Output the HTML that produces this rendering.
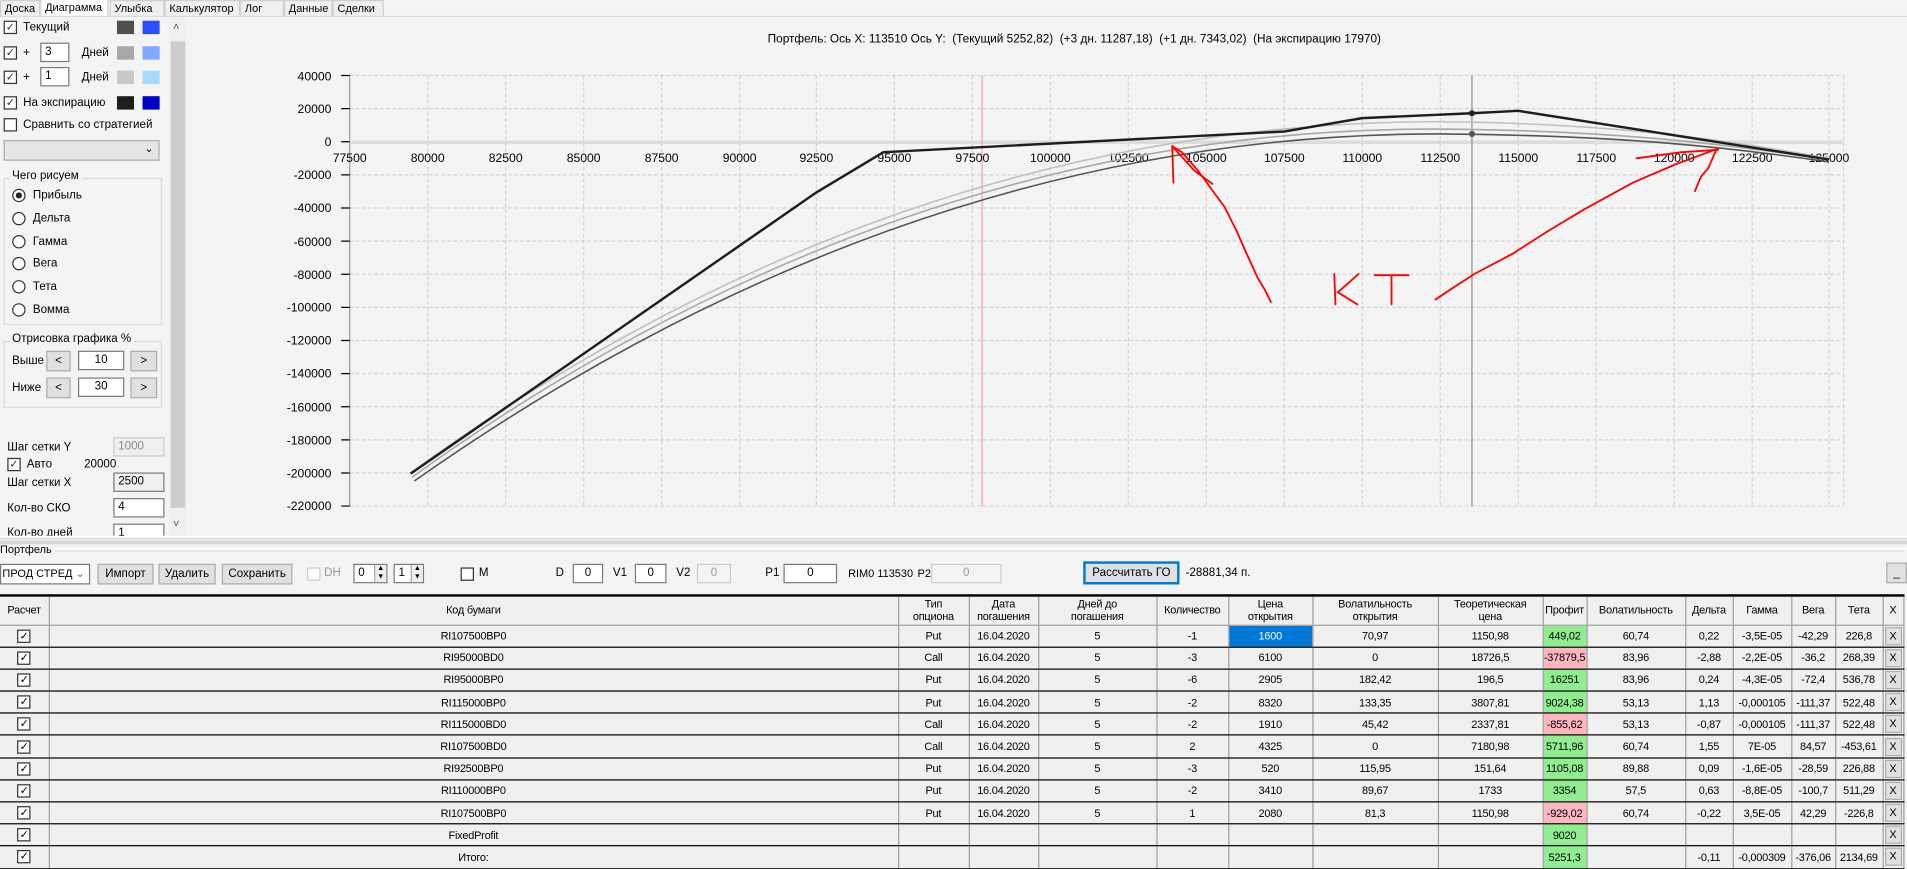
<!DOCTYPE html>
<html><head><meta charset="utf-8"><style>
*{box-sizing:border-box;margin:0;padding:0}
html,body{width:1907px;height:867px;overflow:hidden;background:#f4f4f4}
body{font-family:"Liberation Sans",sans-serif;font-size:9.5px;color:#000}
#w{position:absolute;left:0;top:0;width:1565px;height:712px;transform:scale(1.2185,1.2177);transform-origin:0 0;background:#f4f4f4}
.a{position:absolute;white-space:nowrap;line-height:14px}
.tab{position:absolute;top:0;height:13px;border:1px solid #d0d0d0;border-bottom:none;background:#f0f0f0;font-size:9px;padding:0 3px;line-height:12px;overflow:hidden;white-space:nowrap}
.cb{position:absolute;width:11px;height:11px;border:1px solid #333;background:#fff;font-size:9px;line-height:9px;text-align:center;color:#333}
.sw{position:absolute;width:14px;height:11px}
.tb{position:absolute;height:16px;background:#fff;border:1px solid #7a7a7a;font-size:9.5px;line-height:14px;padding-left:3px}
.btn{position:absolute;height:17px;background:#e1e1e1;border:1px solid #adadad;font-size:9.5px;line-height:15px;text-align:center}
.rd{position:absolute;width:11px;height:11px;border:1px solid #333;border-radius:50%;background:#fff}
.gb{position:absolute;border:1px solid #dcdcdc}
table{position:absolute;left:0;top:488px;border-collapse:collapse;table-layout:fixed;width:1562px;background:#f0f0f0}
td{border-right:1px solid #a0a0a0;border-bottom:1px solid #000;text-align:center;height:18.2px;font-size:9px;padding:0;white-space:nowrap;overflow:hidden;letter-spacing:-0.2px}
tr.h td{height:24px;background:#f0f0f0;border-bottom:1px solid #a0a0a0;line-height:10px;font-size:9px}
td.g{background:#90ee90}td.r{background:#ffb6c1}td.b{background:#0078d7;color:#fff}
td.x span{display:inline-block;width:14px;height:15px;border:1px solid #adadad;background:#e1e1e1;line-height:13px}
.ck{display:inline-block;width:11px;height:11px;border:1px solid #333;background:#fff;font-size:9px;line-height:9px}
</style></head><body><div id="w">
<!-- tabs -->
<div class="tab" style="left:0;width:33px">Доска</div>
<div class="tab" style="left:33px;width:56px;background:#fff;top:-1px;height:14px">Диаграмма</div>
<div class="tab" style="left:90px;width:45px">Улыбка</div>
<div class="tab" style="left:135px;width:62px">Калькулятор</div>
<div class="tab" style="left:197px;width:36px">Лог</div>
<div class="tab" style="left:233px;width:40px">Данные</div>
<div class="tab" style="left:273px;width:42px">Сделки</div>
<div class="a" style="left:0;top:13px;width:1565px;height:1px;background:#dcdcdc"></div>
<!-- left panel -->
<div class="cb" style="left:3px;top:17px">✓</div><div class="a" style="left:19px;top:16px">Текущий</div>
<div class="sw" style="left:96px;top:17px;background:#505050"></div><div class="sw" style="left:117px;top:17px;background:#2b4fff"></div>
<div class="cb" style="left:3px;top:38px">✓</div><div class="a" style="left:19px;top:37px">+</div>
<div class="tb" style="left:33px;top:35px;width:24px">3</div><div class="a" style="left:67px;top:37px">Дней</div>
<div class="sw" style="left:96px;top:38px;background:#a8a8a8"></div><div class="sw" style="left:117px;top:38px;background:#7fa8ff"></div>
<div class="cb" style="left:3px;top:58px">✓</div><div class="a" style="left:19px;top:57px">+</div>
<div class="tb" style="left:33px;top:55px;width:24px">1</div><div class="a" style="left:67px;top:57px">Дней</div>
<div class="sw" style="left:96px;top:58px;background:#c8c8c8"></div><div class="sw" style="left:117px;top:58px;background:#a8d8ff"></div>
<div class="cb" style="left:3px;top:79px">✓</div><div class="a" style="left:19px;top:78px">На экспирацию</div>
<div class="sw" style="left:96px;top:79px;background:#1e1e1e"></div><div class="sw" style="left:117px;top:79px;background:#0000c8"></div>
<div class="cb" style="left:3px;top:97px"></div><div class="a" style="left:19px;top:96px">Сравнить со стратегией</div>
<div class="a" style="left:3px;top:115px;width:128px;height:17px;background:#e5e5e5;border:1px solid #adadad;font-size:9px;text-align:right;padding-right:4px;line-height:13px">⌄</div>
<div class="gb" style="left:3px;top:146px;width:130px;height:121px"></div>
<div class="a" style="left:8px;top:138px;background:#f4f4f4;padding:0 2px">Чего рисуем</div>
<div class="rd" style="left:10px;top:155px"><div style="position:absolute;left:2px;top:2px;width:5px;height:5px;border-radius:50%;background:#222"></div></div><div class="a" style="left:27px;top:154px">Прибыль</div>
<div class="rd" style="left:10px;top:174px"></div><div class="a" style="left:27px;top:173px">Дельта</div>
<div class="rd" style="left:10px;top:193px"></div><div class="a" style="left:27px;top:192px">Гамма</div>
<div class="rd" style="left:10px;top:211px"></div><div class="a" style="left:27px;top:210px">Вега</div>
<div class="rd" style="left:10px;top:230px"></div><div class="a" style="left:27px;top:229px">Тета</div>
<div class="rd" style="left:10px;top:249px"></div><div class="a" style="left:27px;top:248px">Вомма</div>
<div class="gb" style="left:3px;top:280px;width:130px;height:55px"></div>
<div class="a" style="left:8px;top:272px;background:#f4f4f4;padding:0 2px">Отрисовка графика %</div>
<div class="a" style="left:10px;top:290px">Выше</div>
<div class="btn" style="left:38px;top:288px;width:20px">&lt;</div><div class="tb" style="left:64px;top:288px;width:38px;text-align:center;padding:0">10</div><div class="btn" style="left:107px;top:288px;width:22px">&gt;</div>
<div class="a" style="left:10px;top:312px">Ниже</div>
<div class="btn" style="left:38px;top:310px;width:20px">&lt;</div><div class="tb" style="left:64px;top:310px;width:38px;text-align:center;padding:0">30</div><div class="btn" style="left:107px;top:310px;width:22px">&gt;</div>
<div class="a" style="left:6px;top:361px">Шаг сетки Y</div><div class="tb" style="left:93px;top:359px;width:42px;background:#f0f0f0;border-color:#ccc;color:#888">1000</div>
<div class="cb" style="left:6px;top:376px">✓</div><div class="a" style="left:22px;top:375px">Авто</div><div class="a" style="left:69px;top:375px">20000</div>
<div class="a" style="left:6px;top:390px">Шаг сетки X</div><div class="tb" style="left:93px;top:388px;width:42px;background:#f0f0f0">2500</div>
<div class="a" style="left:6px;top:411px">Кол-во СКО</div><div class="tb" style="left:93px;top:409px;width:42px">4</div>
<div class="a" style="left:6px;top:431px;height:9px;overflow:hidden">Кол-во дней</div><div class="tb" style="left:93px;top:430px;width:42px;height:10px;border-bottom:none">1</div>
<div class="a" style="left:139px;top:14px;width:14px;height:426px;background:#f0f0f0"></div>
<div class="a" style="left:140px;top:34px;width:12px;height:383px;background:#cdcdcd"></div>
<div class="a" style="left:142px;top:15px;font-size:9px;color:#555">˄</div>
<div class="a" style="left:142px;top:423px;font-size:9px;color:#555">˅</div>
<!-- chart title -->
<div class="a" style="left:630px;top:26px;font-size:9.7px">Портфель: Ось X: 113510 Ось Y:&nbsp; (Текущий 5252,82)&nbsp; (+3 дн. 11287,18)&nbsp; (+1 дн. 7343,02)&nbsp; (На экспирацию 17970)</div>
<svg class="a" style="left:0;top:0;line-height:normal" width="1565" height="440" viewBox="0 0 1565 440" font-family="Liberation Sans" font-size="10">
<g stroke="#d4d4d4" stroke-dasharray="3,2" stroke-width="1">
<path d="M287,62H1513M287,89.2H1513M287,116.4H1513M287,143.6H1513M287,170.8H1513M287,198H1513M287,225.2H1513M287,252.4H1513M287,279.6H1513M287,306.8H1513M287,334H1513M287,361.2H1513M287,388.4H1513M287,415.6H1513"/>
<path d="M351,62V416M415,62V416M479,62V416M543,62V416M607,62V416M670,62V416M734,62V416M798,62V416M862,62V416M926,62V416M990,62V416M1054,62V416M1118,62V416M1182,62V416M1246,62V416M1310,62V416M1374,62V416M1438,62V416M1501,62V416M1513,62V416"/>
</g>
<path d="M287,62V416" stroke="#999"/>
<path d="M287,116.8H1513" stroke="#ddd" stroke-width="3"/>
<path d="M806,62V416" stroke="#f4a0b0"/>
<path d="M1208,62V416" stroke="#8a8f99"/>
<g stroke="#000"><path d="M280,62h7M280,89.2h7M280,116.4h7M280,143.6h7M280,170.8h7M280,198h7M280,225.2h7M280,252.4h7M280,279.6h7M280,306.8h7M280,334h7M280,361.2h7M280,388.4h7M280,415.6h7"/></g>
<g text-anchor="end">
<text x="272" y="66">40000</text><text x="272" y="93">20000</text><text x="272" y="120">0</text><text x="272" y="147">-20000</text><text x="272" y="174">-40000</text><text x="272" y="202">-60000</text><text x="272" y="229">-80000</text><text x="272" y="256">-100000</text><text x="272" y="283">-120000</text><text x="272" y="310">-140000</text><text x="272" y="338">-160000</text><text x="272" y="365">-180000</text><text x="272" y="392">-200000</text><text x="272" y="419">-220000</text></g>
<g text-anchor="middle">
<text x="287" y="133">77500</text><text x="351" y="133">80000</text><text x="415" y="133">82500</text><text x="479" y="133">85000</text><text x="543" y="133">87500</text><text x="607" y="133">90000</text><text x="670" y="133">92500</text><text x="734" y="133">95000</text><text x="798" y="133">97500</text><text x="862" y="133">100000</text><text x="926" y="133">102500</text><text x="990" y="133">105000</text><text x="1054" y="133">107500</text><text x="1118" y="133">110000</text><text x="1182" y="133">112500</text><text x="1246" y="133">115000</text><text x="1310" y="133">117500</text><text x="1374" y="133">120000</text><text x="1438" y="133">122500</text><text x="1501" y="133">125000</text></g>
<g fill="none">
<path d="M336,389 C600,198 880,100 1180,100 C1330,101 1420,116 1501,130" stroke="#c0c0c0" stroke-width="1.3"/>
<path d="M338,392 C605,200 885,105 1180,106 C1330,107 1420,119 1501,131" stroke="#a8a8a8" stroke-width="1.3"/>
<path d="M340,395 C610,205 890,110 1180,110 C1330,111 1420,121 1501,133" stroke="#555" stroke-width="1.3"/>
<path d="M337,389 L670,158 L725,125 L1054,108 L1118,97 L1208,93 L1246,91 L1501,131" stroke="#1e1e1e" stroke-width="2"/>
</g>
<circle cx="1208" cy="93" r="2.5" fill="#222"/><circle cx="1208" cy="110" r="2.5" fill="#555"/>
<g stroke="#f00" stroke-width="1.5" fill="none" stroke-linecap="round">
<path d="M1043,248 L1038,238 L1032,228 L1022,206 L1015,190 L1005,170 L994,155 L983,140 L970,125 L962,120"/>
<path d="M962,120 L963,150"/><path d="M962,120 L980,140 L995,151"/>
<path d="M1178,246 L1190,238 L1210,225 L1242,208 L1270,190 L1300,172 L1340,150 L1375,135 L1410,122"/>
<path d="M1343,130 L1380,125 L1410,123"/><path d="M1391,157 L1396,145 L1402,138 L1408,124"/>
<path d="M1095,225 L1096,250 M1115,225 L1098,240 L1114,250"/>
<path d="M1128,226 L1156,226 M1142,226 L1142,250"/>
</g>
</svg>
<!-- splitter -->
<div class="a" style="left:0;top:440px;width:1565px;height:1px;background:#fff"></div>
<div class="a" style="left:0;top:442px;width:1565px;height:1px;background:#d8d8d8"></div>
<div class="a" style="left:0;top:444px;width:1565px;height:3px;background:#d3d3d3"></div>
<div class="a" style="left:0;top:450px;width:1565px;height:1px;background:#fff"></div>
<div class="a" style="left:0;top:444px;font-size:9px">Портфель</div>
<div class="a" style="left:45px;top:452px;width:1518px;height:1px;background:#dcdcdc"></div>
<!-- toolbar -->
<div class="a" style="left:0;top:463px;width:74px;height:17px;background:#fff;border:1px solid #7a7a7a;line-height:15px;padding-left:1px;font-size:9px">ПРОД СТРЕД <span style="color:#666">⌄</span></div>
<div class="btn" style="left:80px;top:463px;width:46px">Импорт</div>
<div class="btn" style="left:130px;top:463px;width:47px">Удалить</div>
<div class="btn" style="left:182px;top:463px;width:58px">Сохранить</div>
<div class="cb" style="left:252px;top:466px;border-color:#ccc"></div><div class="a" style="left:266px;top:464px;color:#999">DH</div>
<div class="tb" style="left:290px;top:463px;width:28px">0</div><div class="a" style="left:307px;top:464px;width:10px;height:14px;background:#eee;border-left:1px solid #aaa;font-size:6px;line-height:7px;text-align:center">▲<br>▼</div>
<div class="tb" style="left:323px;top:463px;width:25px">1</div><div class="a" style="left:337px;top:464px;width:10px;height:14px;background:#eee;border-left:1px solid #aaa;font-size:6px;line-height:7px;text-align:center">▲<br>▼</div>
<div class="cb" style="left:378px;top:466px"></div><div class="a" style="left:393px;top:464px">M</div>
<div class="a" style="left:456px;top:464px">D</div><div class="tb" style="left:470px;top:463px;width:25px;text-align:center;padding:0">0</div>
<div class="a" style="left:503px;top:464px">V1</div><div class="tb" style="left:521px;top:463px;width:26px;text-align:center;padding:0">0</div>
<div class="a" style="left:555px;top:464px">V2</div><div class="tb" style="left:572px;top:463px;width:28px;text-align:center;padding:0;border-color:#ccc;color:#999;background:#f4f4f4">0</div>
<div class="a" style="left:628px;top:464px">P1</div><div class="tb" style="left:643px;top:463px;width:44px;text-align:center;padding:0">0</div>
<div class="a" style="left:696px;top:464px;font-size:9px">RIM0 113530</div><div class="a" style="left:753px;top:464px;font-size:9px">P2</div>
<div class="tb" style="left:764px;top:463px;width:58px;text-align:center;padding:0;border-color:#ccc;color:#999;background:#f4f4f4">0</div>
<div class="btn" style="left:889px;top:461px;width:79px;height:19px;border:2px solid #0078d7;line-height:15px">Рассчитать ГО</div>
<div class="a" style="left:973px;top:464px">-28881,34 п.</div>
<div class="btn" style="left:1548px;top:462px;width:17px">_</div>
<!-- table -->
<table>
<colgroup><col style="width:40px"><col style="width:697px"><col style="width:58px"><col style="width:57px"><col style="width:97px"><col style="width:59px"><col style="width:69px"><col style="width:103px"><col style="width:86px"><col style="width:36px"><col style="width:81px"><col style="width:39px"><col style="width:48px"><col style="width:36px"><col style="width:39px"><col style="width:17px"></colgroup>
<tr class="h" style="border-top:2px solid #000"><td>Расчет</td><td>Код бумаги</td><td>Тип<br>опциона</td><td>Дата<br>погашения</td><td>Дней до<br>погашения</td><td>Количество</td><td>Цена<br>открытия</td><td>Волатильность<br>открытия</td><td>Теоретическая<br>цена</td><td>Профит</td><td>Волатильность</td><td>Дельта</td><td>Гамма</td><td>Вега</td><td>Тета</td><td>X</td></tr>
<tr><td><span class="ck">✓</span></td><td>RI107500BP0</td><td>Put</td><td>16.04.2020</td><td>5</td><td>-1</td><td class="b">1600</td><td>70,97</td><td>1150,98</td><td class="g">449,02</td><td>60,74</td><td>0,22</td><td>-3,5E-05</td><td>-42,29</td><td>226,8</td><td class="x"><span>X</span></td></tr>
<tr><td><span class="ck">✓</span></td><td>RI95000BD0</td><td>Call</td><td>16.04.2020</td><td>5</td><td>-3</td><td>6100</td><td>0</td><td>18726,5</td><td class="r">-37879,5</td><td>83,96</td><td>-2,88</td><td>-2,2E-05</td><td>-36,2</td><td>268,39</td><td class="x"><span>X</span></td></tr>
<tr><td><span class="ck">✓</span></td><td>RI95000BP0</td><td>Put</td><td>16.04.2020</td><td>5</td><td>-6</td><td>2905</td><td>182,42</td><td>196,5</td><td class="g">16251</td><td>83,96</td><td>0,24</td><td>-4,3E-05</td><td>-72,4</td><td>536,78</td><td class="x"><span>X</span></td></tr>
<tr><td><span class="ck">✓</span></td><td>RI115000BP0</td><td>Put</td><td>16.04.2020</td><td>5</td><td>-2</td><td>8320</td><td>133,35</td><td>3807,81</td><td class="g">9024,38</td><td>53,13</td><td>1,13</td><td>-0,000105</td><td>-111,37</td><td>522,48</td><td class="x"><span>X</span></td></tr>
<tr><td><span class="ck">✓</span></td><td>RI115000BD0</td><td>Call</td><td>16.04.2020</td><td>5</td><td>-2</td><td>1910</td><td>45,42</td><td>2337,81</td><td class="r">-855,62</td><td>53,13</td><td>-0,87</td><td>-0,000105</td><td>-111,37</td><td>522,48</td><td class="x"><span>X</span></td></tr>
<tr><td><span class="ck">✓</span></td><td>RI107500BD0</td><td>Call</td><td>16.04.2020</td><td>5</td><td>2</td><td>4325</td><td>0</td><td>7180,98</td><td class="g">5711,96</td><td>60,74</td><td>1,55</td><td>7E-05</td><td>84,57</td><td>-453,61</td><td class="x"><span>X</span></td></tr>
<tr><td><span class="ck">✓</span></td><td>RI92500BP0</td><td>Put</td><td>16.04.2020</td><td>5</td><td>-3</td><td>520</td><td>115,95</td><td>151,64</td><td class="g">1105,08</td><td>89,88</td><td>0,09</td><td>-1,6E-05</td><td>-28,59</td><td>226,88</td><td class="x"><span>X</span></td></tr>
<tr><td><span class="ck">✓</span></td><td>RI110000BP0</td><td>Put</td><td>16.04.2020</td><td>5</td><td>-2</td><td>3410</td><td>89,67</td><td>1733</td><td class="g">3354</td><td>57,5</td><td>0,63</td><td>-8,8E-05</td><td>-100,7</td><td>511,29</td><td class="x"><span>X</span></td></tr>
<tr><td><span class="ck">✓</span></td><td>RI107500BP0</td><td>Put</td><td>16.04.2020</td><td>5</td><td>1</td><td>2080</td><td>81,3</td><td>1150,98</td><td class="r">-929,02</td><td>60,74</td><td>-0,22</td><td>3,5E-05</td><td>42,29</td><td>-226,8</td><td class="x"><span>X</span></td></tr>
<tr><td><span class="ck">✓</span></td><td>FixedProfit</td><td></td><td></td><td></td><td></td><td></td><td></td><td></td><td class="g">9020</td><td></td><td></td><td></td><td></td><td></td><td class="x"><span>X</span></td></tr>
<tr><td><span class="ck">✓</span></td><td>Итого:</td><td></td><td></td><td></td><td></td><td></td><td></td><td></td><td class="g">5251,3</td><td></td><td>-0,11</td><td>-0,000309</td><td>-376,06</td><td>2134,69</td><td class="x"><span>X</span></td></tr>
</table>
</div></body></html>
